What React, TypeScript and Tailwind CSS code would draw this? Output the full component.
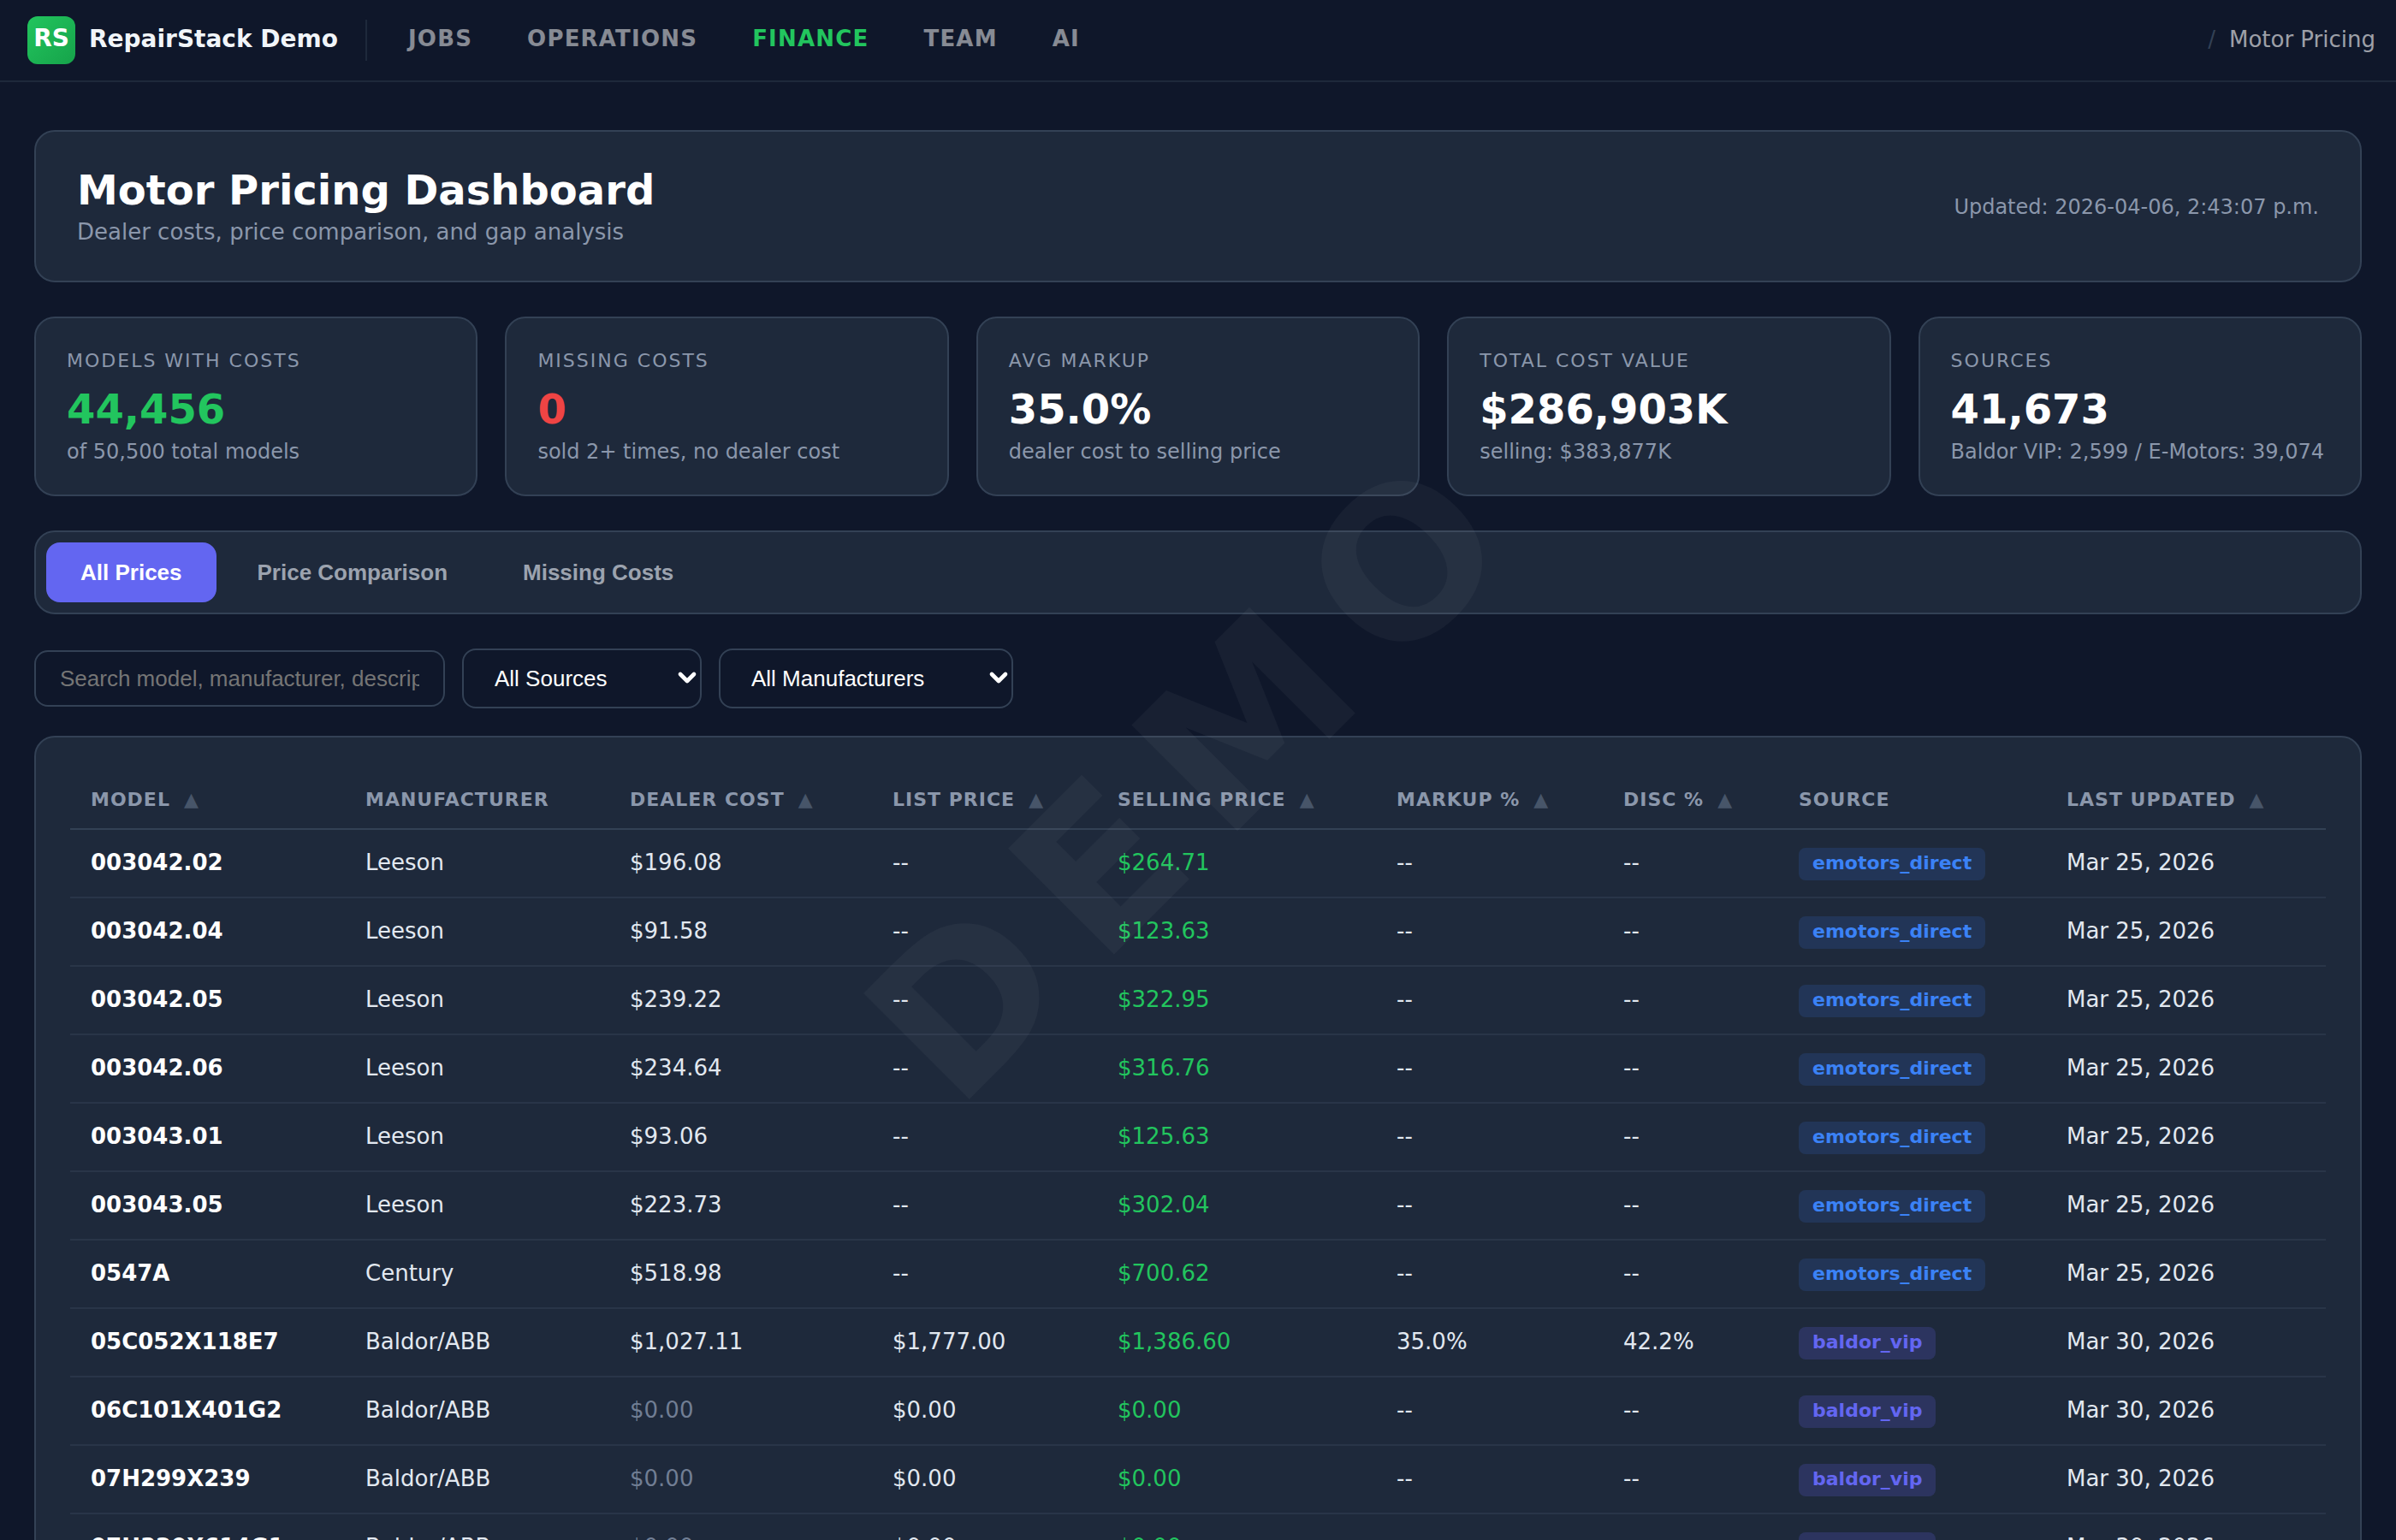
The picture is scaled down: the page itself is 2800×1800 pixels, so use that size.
import { ChevronDown } from "lucide-react";

const navLinks = ["Jobs", "Operations", "Finance", "Team", "AI"];

const stats = [
  { label: "Models with costs", value: "44,456", color: "text-[#22c55e]", sub: "of 50,500 total models" },
  { label: "Missing costs", value: "0", color: "text-[#ef4444]", sub: "sold 2+ times, no dealer cost" },
  { label: "Avg markup", value: "35.0%", color: "text-white", sub: "dealer cost to selling price" },
  { label: "Total cost value", value: "$286,903K", color: "text-white", sub: "selling: $383,877K" },
  { label: "Sources", value: "41,673", color: "text-white", sub: "Baldor VIP: 2,599 / E-Motors: 39,074" },
];

const columns = [
  { name: "Model", width: "w-[321px]", sort: true },
  { name: "Manufacturer", width: "w-[309px]", sort: false },
  { name: "Dealer Cost", width: "w-[307px]", sort: true },
  { name: "List Price", width: "w-[263px]", sort: true },
  { name: "Selling Price", width: "w-[326px]", sort: true },
  { name: "Markup %", width: "w-[265px]", sort: true },
  { name: "Disc %", width: "w-[205px]", sort: true },
  { name: "Source", width: "w-[313px]", sort: false },
  { name: "Last Updated", width: "w-[327px]", sort: true },
];

const rows = [
  ["003042.02", "Leeson", "$196.08", "--", "$264.71", "--", "--", "emotors_direct", "Mar 25, 2026"],
  ["003042.04", "Leeson", "$91.58", "--", "$123.63", "--", "--", "emotors_direct", "Mar 25, 2026"],
  ["003042.05", "Leeson", "$239.22", "--", "$322.95", "--", "--", "emotors_direct", "Mar 25, 2026"],
  ["003042.06", "Leeson", "$234.64", "--", "$316.76", "--", "--", "emotors_direct", "Mar 25, 2026"],
  ["003043.01", "Leeson", "$93.06", "--", "$125.63", "--", "--", "emotors_direct", "Mar 25, 2026"],
  ["003043.05", "Leeson", "$223.73", "--", "$302.04", "--", "--", "emotors_direct", "Mar 25, 2026"],
  ["0547A", "Century", "$518.98", "--", "$700.62", "--", "--", "emotors_direct", "Mar 25, 2026"],
  ["05C052X118E7", "Baldor/ABB", "$1,027.11", "$1,777.00", "$1,386.60", "35.0%", "42.2%", "baldor_vip", "Mar 30, 2026"],
  ["06C101X401G2", "Baldor/ABB", "$0.00", "$0.00", "$0.00", "--", "--", "baldor_vip", "Mar 30, 2026"],
  ["07H299X239", "Baldor/ABB", "$0.00", "$0.00", "$0.00", "--", "--", "baldor_vip", "Mar 30, 2026"],
  ["07H320X614G1", "Baldor/ABB", "$0.00", "$0.00", "$0.00", "--", "--", "baldor_vip", "Mar 30, 2026"],
];

function TopNav() {
  return (
    <nav className="h-[96px] flex items-center justify-between border-b-2 border-[#1e293b] bg-[#0f172a] pl-[32px] pr-[24px]">
      <div className="flex items-center">
        <div className="w-[56px] h-[56px] rounded-[12px] bg-gradient-to-br from-[#22c55e] to-[#16a34a] flex items-center justify-center text-white font-bold text-[28px] pb-[4px]">
          RS
        </div>
        <span className="ml-[16px] pb-[2px] text-[28px] font-bold text-[#f1f5f9]">RepairStack Demo</span>
        <div className="w-[2px] h-[48px] bg-[#1e293b] ml-[32px] mr-[48px]" />
        <div className="flex items-center gap-[64px] pb-[4px]">
          {navLinks.map((link) => (
            <span
              key={link}
              className={`text-[26px] font-bold uppercase tracking-[1.2px] ${link === "Finance" ? "text-[#22c55e]" : "text-white/50"}`}
            >
              {link}
            </span>
          ))}
        </div>
      </div>
      <div className="flex items-center gap-[16px] pb-[2px] text-[26px] text-white/60">
        <span className="text-[#334155]">/</span>
        <span>Motor Pricing</span>
      </div>
    </nav>
  );
}

function Header() {
  return (
    <section className="h-[178px] flex items-center justify-between rounded-[24px] border-2 border-[#334155] bg-[#1e293b] px-[48px]">
      <div>
        <h1 className="text-[48px] leading-[56px] font-bold text-white">Motor Pricing Dashboard</h1>
        <p className="text-[26px] leading-[36px] mt-[3px] text-[#8b97ab]">Dealer costs, price comparison, and gap analysis</p>
      </div>
      <p className="text-[24px] pt-[2px] text-[#8b97ab]">Updated: 2026-04-06, 2:43:07 p.m.</p>
    </section>
  );
}

function StatCards() {
  return (
    <section className="grid grid-cols-5 gap-[32px] mt-[40px]">
      {stats.map((stat) => (
        <div key={stat.label} className="h-[210px] rounded-[24px] border-2 border-[#334155] bg-[#1e293b] px-[36px] pt-[34px]">
          <div className="text-[22px] leading-[32px] uppercase tracking-[2px] text-[#8b97ab]">{stat.label}</div>
          <div className={`text-[48px] leading-[64px] font-bold mt-[8px] ${stat.color}`}>{stat.value}</div>
          <div className="text-[24px] leading-[36px] text-[#8b97ab] whitespace-nowrap">{stat.sub}</div>
        </div>
      ))}
    </section>
  );
}

function Tabs() {
  return (
    <section className="h-[98px] flex items-center gap-[8px] rounded-[24px] border-2 border-[#334155] bg-[#1e293b] px-[12px] mt-[40px] font-['Liberation_Sans',sans-serif] text-[26px] font-semibold text-[#9ca3af]">
      <button className="h-[70px] px-[40px] rounded-[16px] bg-[#6366f1] text-white font-semibold">All Prices</button>
      <button className="h-[70px] px-[40px] rounded-[16px] font-semibold">Price Comparison</button>
      <button className="h-[70px] px-[40px] rounded-[16px] font-semibold">Missing Costs</button>
    </section>
  );
}

function FilterSelect({ label, width }: { label: string; width: string }) {
  return (
    <div className={`relative ${width}`}>
      <select className="w-full h-[70px] appearance-none rounded-[16px] border-2 border-[#334155] bg-[#0f172a] pl-[36px] text-[26px] text-white">
        <option>{label}</option>
      </select>
      <ChevronDown className="absolute right-[1px] top-[18px] w-[32px] h-[32px] text-white pointer-events-none" strokeWidth={3.5} />
    </div>
  );
}

function Filters() {
  return (
    <section className="flex items-center gap-[20px] mt-[40px] font-['Liberation_Sans',sans-serif]">
      <input
        type="text"
        placeholder="Search model, manufacturer, description..."
        className="w-[480px] h-[66px] rounded-[16px] border-2 border-[#334155] bg-[#0f172a] px-[28px] text-[26px] text-white placeholder:text-[#757575] focus:outline-none"
      />
      <FilterSelect label="All Sources" width="w-[280px]" />
      <FilterSelect label="All Manufacturers" width="w-[344px]" />
    </section>
  );
}

function Badge({ source }: { source: string }) {
  const direct = source === "emotors_direct";
  return (
    <span
      className={`inline-block h-[38px] rounded-[8px] px-[16px] text-[22px] leading-[36px] font-bold ${direct ? "bg-[#3b82f6]/15 text-[#3b82f6]" : "bg-[#6366f1]/20 text-[#6366f1]"}`}
    >
      {source}
    </span>
  );
}

function PriceTable() {
  return (
    <section className="rounded-[24px] border-2 border-[#334155] bg-[#1e293b] px-[40px] pt-[40px] mt-[32px] pb-[40px]">
      <table className="w-full table-fixed border-collapse">
        <thead>
          <tr className="border-b-2 border-[#334155]">
            {columns.map((col) => (
              <th
                key={col.name}
                className={`${col.width} h-[67px] px-[24px] pb-[1px] text-left text-[22px] font-bold uppercase tracking-[1px] text-[#8b97ab] whitespace-nowrap`}
              >
                {col.name}
                {col.sort && <span className="ml-[16px] text-[22px] text-[#475569]">▲</span>}
              </th>
            ))}
          </tr>
        </thead>
        <tbody>
          {rows.map((row) => (
            <tr key={row[0]} className="h-[80px] border-b-2 border-[#293548] text-[26px] text-[#e2e8f0]">
              {row.map((cell, i) => (
                <td
                  key={i}
                  className={`px-[24px] pb-[2px] whitespace-nowrap ${i === 0 ? "font-bold text-white" : ""} ${i === 4 ? "text-[#22c55e]" : ""} ${i === 2 && cell === "$0.00" ? "text-[#717e94]" : ""}`}
                >
                  {i === 7 ? <Badge source={cell} /> : cell}
                </td>
              ))}
            </tr>
          ))}
        </tbody>
      </table>
    </section>
  );
}

export default function App() {
  return (
    <div className="relative h-screen overflow-hidden bg-[#0f172a] font-['DejaVu_Sans',sans-serif]">
      <TopNav />
      <main className="px-[40px] pt-[56px]">
        <Header />
        <StatCards />
        <Tabs />
        <Filters />
        <PriceTable />
      </main>
      {/* watermark over everything */}
      <div className="pointer-events-none absolute inset-0 flex items-center justify-center">
        <span className="-rotate-45 text-[240px] font-bold tracking-[40px] text-white/[0.04] whitespace-nowrap">DEMO</span>
      </div>
    </div>
  );
}
